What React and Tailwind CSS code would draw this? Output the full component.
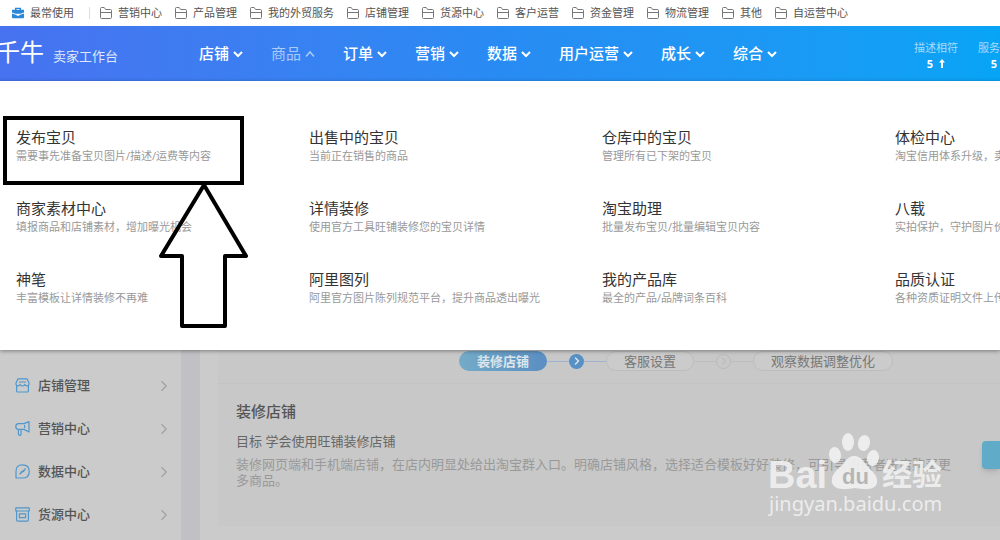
import { ChevronRight } from 'lucide-react';

const bookmarks = ['营销中心', '产品管理', '我的外贸服务', '店铺管理', '货源中心', '客户运营', '资金管理', '物流管理', '其他', '自运营中心'];

const navItems = ['店铺', '商品', '订单', '营销', '数据', '用户运营', '成长', '综合'];

const menuItems = [
  { title: '发布宝贝', desc: '需要事先准备宝贝图片/描述/运费等内容' },
  { title: '出售中的宝贝', desc: '当前正在销售的商品' },
  { title: '仓库中的宝贝', desc: '管理所有已下架的宝贝' },
  { title: '体检中心', desc: '淘宝信用体系升级，卖家体检' },
  { title: '商家素材中心', desc: '填报商品和店铺素材，增加曝光机会' },
  { title: '详情装修', desc: '使用官方工具旺铺装修您的宝贝详情' },
  { title: '淘宝助理', desc: '批量发布宝贝/批量编辑宝贝内容' },
  { title: '八载', desc: '实拍保护，守护图片价值' },
  { title: '神笔', desc: '丰富模板让详情装修不再难' },
  { title: '阿里图列', desc: '阿里官方图片陈列规范平台，提升商品透出曝光' },
  { title: '我的产品库', desc: '最全的产品/品牌词条百科' },
  { title: '品质认证', desc: '各种资质证明文件上传' },
];

const sideItems = [
  { label: '店铺管理', Icon: ShopIcon },
  { label: '营销中心', Icon: HornIcon },
  { label: '数据中心', Icon: CompassIcon },
  { label: '货源中心', Icon: BoxIcon },
];

function FolderIcon() {
  return (
    <svg width="12" height="12" viewBox="0 0 12 12" fill="none" stroke="#777" strokeLinejoin="round">
      <path d="M.5 10.5V1.5Q.5 .5 1.5 .5H4.2L5.6 2.5H10.5Q11.5 2.5 11.5 3.5V10.5Q11.5 11.5 10.5 11.5H1.5Q.5 11.5 .5 10.5ZM.5 5.5H11.5" />
    </svg>
  );
}

function BriefcaseIcon() {
  return (
    <svg width="12" height="12" viewBox="0 0 13 12" fill="none">
      <path d="M4 3V1H9V3" stroke="#2b87d8" strokeWidth="1.6" />
      <path d="M0 2.6H13V5.4L9 6.8H4L0 5.4ZM0 6.6L4 8H5V9H8V8H9L13 6.6V10.6Q13 11.6 12 11.6H1Q0 11.6 0 10.6Z" fill="#2b87d8" />
    </svg>
  );
}

function Caret({ up }) {
  return (
    <svg width="10" height="8" viewBox="0 0 10 8" fill="none" stroke="currentColor" strokeWidth={up ? 1.5 : 2}>
      <path d={up ? 'M1 6.5L5 2L9 6.5' : 'M1 2L5 6L9 2'} />
    </svg>
  );
}

function ScoreArrow() {
  return (
    <svg width="6" height="9" viewBox="0 0 6 9" fill="currentColor">
      <path d="M3 0L6 3.6H4V9H2V3.6H0Z" />
    </svg>
  );
}

function SideSvg({ children }) {
  return (
    <svg width="15" height="15" viewBox="0 0 15 15" fill="none" stroke="#4f97cc" strokeWidth="1.2" strokeLinejoin="round" strokeLinecap="round">
      {children}
    </svg>
  );
}

function ShopIcon() {
  return (
    <SideSvg>
      <path d="M3 .8H12L14 5Q14.3 7.6 12.2 7.8Q10.4 7.8 9.8 6.4Q9 8 7.5 8Q6 8 5.2 6.4Q4.6 7.8 2.8 7.8Q.7 7.6 1 5ZM4.4 4H10.6M1.6 7.8V13Q1.6 14 2.6 14H12.4Q13.4 14 13.4 13V7.8" />
    </SideSvg>
  );
}

function HornIcon() {
  return (
    <SideSvg>
      <path d="M9 2.6H3.4Q.8 2.8 .8 5.4Q.8 8.2 3.4 8.4H9L14 11V.6ZM9.6 4.4V6.6M3.4 8.4V13Q3.4 14.4 4.8 14.4Q6 14.4 6 13V8.6" />
    </SideSvg>
  );
}

function CompassIcon() {
  return (
    <SideSvg>
      <path d="M1 14V7.4Q1 .8 7.6 .8Q14.2 .8 14.2 7.4Q14.2 14 7.6 14ZM5 10L6.8 7.4M10.2 5L8.4 7.6M5 10L10.2 5" />
    </SideSvg>
  );
}

function BoxIcon() {
  return (
    <SideSvg>
      <path d="M.8 .8H14.2V4H.8ZM1.6 4V13Q1.6 14.2 2.8 14.2H12.2Q13.4 14.2 13.4 13V4M4.4 6.8H10.6V10.6H4.4Z" />
    </SideSvg>
  );
}

function BookmarkBar() {
  return (
    <div className="flex h-[26px] items-center overflow-hidden bg-white pl-3 text-[11px] whitespace-nowrap text-[#555]">
      <a href="#" className="flex items-center gap-[6px]">
        <BriefcaseIcon />
        最常使用
      </a>
      <span className="mr-[10px] ml-[15px] h-3 w-px bg-[#ddd]" />
      <div className="flex gap-[13px]">
        {bookmarks.map((b) => (
          <a key={b} href="#" className="flex items-center gap-[6px]">
            <FolderIcon />
            {b}
          </a>
        ))}
      </div>
    </div>
  );
}

function Score({ label, value }) {
  return (
    <div className="flex flex-col items-center text-[11px] leading-4">
      <span className="text-[#a5dcfc]">{label}</span>
      <span className="flex items-center gap-[6px] font-bold">
        {value}
        <ScoreArrow />
      </span>
    </div>
  );
}

function Header() {
  return (
    <header className="flex h-[55px] items-center overflow-hidden bg-linear-to-r from-[#4772f0] via-[#288bf3] to-[#07a4f5] whitespace-nowrap text-white">
      <div className="flex w-[199px] shrink-0 items-baseline gap-[9px] pb-1">
        <span className="-ml-1 text-2xl">千牛</span>
        <span className="text-[13px] text-[#dfe8ff]">卖家工作台</span>
      </div>
      <nav className="flex gap-7">
        {navItems.map((item) => (
          <button
            key={item}
            className={item === '商品' ? 'flex items-center gap-1 text-[15px] text-[#a9cbfa]' : 'flex items-center gap-1 text-[15px] font-medium'}
          >
            {item}
            <Caret up={item === '商品'} />
          </button>
        ))}
      </nav>
      <div className="-mr-[22px] ml-auto flex shrink-0 gap-5 pt-1">
        <Score label="描述相符" value="5" />
        <Score label="服务态度" value="5" />
      </div>
    </header>
  );
}

function MegaMenu() {
  return (
    <div className="relative z-10 bg-white shadow-[0_1px_4px_rgba(0,0,0,0.4)]">
      <div className="grid grid-cols-[repeat(4,293px)] gap-y-[33px] overflow-hidden px-4 pt-[46px] pb-[43px] whitespace-nowrap">
        {menuItems.map((m) => (
          <a key={m.title} href="#" className="block">
            <div className="text-[15px] leading-5 text-[#333]">{m.title}</div>
            <div className="text-[11px] leading-[18px] text-[#999]">{m.desc}</div>
          </a>
        ))}
      </div>
      {/* marker box and arrow over the first entry */}
      <svg className="pointer-events-none absolute top-0 left-0" width="260" height="260" viewBox="0 81 260 260" fill="none" stroke="#000" strokeWidth="4" strokeLinejoin="round">
        <rect x="5" y="118" width="237" height="65" strokeLinejoin="miter" />
        <path d="M204 185L246 256H225V326H182V256H161Z" />
      </svg>
    </div>
  );
}

function Sidebar() {
  return (
    <aside className="w-[181px] shrink-0 bg-[#cbcbcb] pt-[14px]">
      {sideItems.map(({ label, Icon }) => (
        <a key={label} href="#" className="flex h-[43px] items-center pr-2 pl-[15px] text-[13px] font-medium text-[#555]">
          <Icon />
          <span className="ml-2 flex-1">{label}</span>
          <ChevronRight size={18} strokeWidth={1.5} className="text-[#a0a0a0]" />
        </a>
      ))}
    </aside>
  );
}

function Steps() {
  return (
    <div className="flex h-[34px] items-start border-b border-[#c3c3c3] pt-px pl-[241px] text-[13px] whitespace-nowrap text-[#777]">
      <div className="flex items-center">
        <button className="h-5 rounded-full bg-linear-to-r from-[#74abc8] to-[#5b8ec2] px-[18px] leading-5 font-bold text-[#dde5ea]">装修店铺</button>
        <span className="h-px w-[22px] bg-[#9db5d2]" />
        <span className="flex size-[15px] items-center justify-center rounded-full bg-[#5790c4] text-[#dde5ea]">
          <ChevronRight size={12} strokeWidth={3} />
        </span>
        <span className="h-px w-[22px] bg-[#9db5d2]" />
        <button className="h-5 rounded-full border border-[#bdbdbd] bg-[#cbcbcb] px-[17px] leading-4">客服设置</button>
        <span className="h-px w-[22px] bg-[#bdbdbd]" />
        <span className="flex size-[15px] items-center justify-center rounded-full border border-[#bababa] text-[#b4b4b4]">
          <ChevronRight size={12} strokeWidth={2} />
        </span>
        <span className="h-px w-[22px] bg-[#bdbdbd]" />
        <button className="h-5 rounded-full border border-[#bdbdbd] bg-[#cbcbcb] px-[17px] leading-4">观察数据调整优化</button>
      </div>
    </div>
  );
}

function Watermark() {
  return (
    <svg className="pointer-events-none absolute top-[81px] right-[52px]" width="184" height="90" viewBox="764 431 184 90" fill="#f0f0f0" fillOpacity="0.92" fontFamily="'Liberation Sans', 'Noto Sans CJK SC', sans-serif">
      <ellipse cx="848" cy="442" rx="6" ry="9" />
      <ellipse cx="864" cy="443" rx="6" ry="8" transform="rotate(12 864 443)" />
      <ellipse cx="835" cy="455" rx="6" ry="8" transform="rotate(-8 835 455)" />
      <ellipse cx="873" cy="458" rx="6" ry="8" transform="rotate(10 873 458)" />
      <path d="M854 456C862 456 864 463 869 468C875 473 878 478 877 483C875 490 866 490 855 488C844 490 835 490 832 483C831 477 834 472 840 467C845 463 847 456 854 456Z" />
      <text x="768" y="488" fontSize="38" fontWeight="bold">Bai</text>
      <text x="842" y="484" fontSize="22" fontWeight="bold" fill="#b0b0b0">du</text>
      <text x="882" y="485" fontSize="30" fontWeight="bold">经验</text>
      <text x="769" y="511" fontSize="20" fontFamily="'Noto Sans', sans-serif">jingyan.baidu.com</text>
    </svg>
  );
}

function Content() {
  return (
    <main className="min-w-0 flex-1 bg-[#cbcbcb] pl-[18px]">
      <section className="relative bg-[#c8c8c8] pb-[38px]">
        <Steps />
        <div className="pt-[15px] pr-[46px] pl-[18px]">
          <h2 className="text-[15px] leading-6 font-medium text-[#555]">装修店铺</h2>
          <p className="mt-[7px] text-[13px] leading-[22px] text-[#666]">目标 学会使用旺铺装修店铺</p>
          <p className="mt-1 text-[13px] leading-4 text-[#999]">
            装修网页端和手机端店铺，在店内明显处给出淘宝群入口。明确店铺风格，选择适合模板好好装修，可引导消费者进店购买更多商品。
          </p>
        </div>
        <button aria-label="开始" className="absolute top-[91px] right-0 h-7 w-[18px] rounded-l-sm bg-[#5fabc8] shadow-md" />
        <Watermark />
      </section>
    </main>
  );
}

export default function App() {
  return (
    <div className="flex min-h-screen flex-col overflow-hidden bg-[#cbcbcb] font-['Open_Sans','Noto_Sans_CJK_SC',sans-serif]">
      <BookmarkBar />
      <Header />
      <MegaMenu />
      <div className="flex flex-1">
        <Sidebar />
        <div className="w-[19px] shrink-0 bg-[#c1c1c5]" />
        <Content />
      </div>
    </div>
  );
}
